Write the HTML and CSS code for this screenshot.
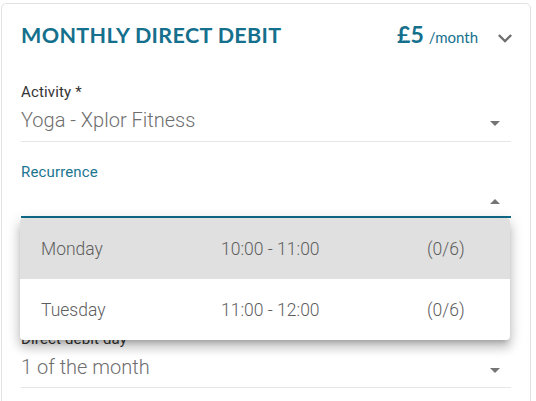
FILE: index.html
```html
<!DOCTYPE html>
<html lang="en">
<head>
<meta charset="utf-8">
<title>Monthly Direct Debit</title>
<link rel="stylesheet" href="styles.css">
</head>
<body>
<div class="card">
  <div class="header">
    <h2 class="title">MONTHLY DIRECT DEBIT</h2>
    <div class="price"><span class="amount">£5</span><span class="per">/month</span></div>
    <svg class="chevron" width="14" height="9" viewBox="6 8.59 12 7.41" aria-hidden="true"><path d="M7.41 8.59L12 13.17 16.59 8.59 18 10l-6 6-6-6z" fill="#6e6e6e"/></svg>
  </div>

  <div class="field">
    <div class="label">Activity *</div>
    <div class="select">
      <span class="value">Yoga - Xplor Fitness</span>
      <svg class="arrow" width="10" height="5" viewBox="0 0 10 5" aria-hidden="true"><path d="M0 0h10L5 5z" fill="#757575"/></svg>
    </div>
  </div>

  <div class="field focused">
    <div class="label">Recurrence</div>
    <div class="select">
      <span class="value"></span>
      <svg class="arrow" width="10" height="5" viewBox="0 0 10 5" aria-hidden="true"><path d="M0 5h10L5 0z" fill="#757575"/></svg>
    </div>
    <div class="menu">
      <div class="option active"><span>Monday</span><span>10:00 - 11:00</span><span>(0/6)</span></div>
      <div class="option"><span>Tuesday</span><span>11:00 - 12:00</span><span>(0/6)</span></div>
    </div>
  </div>

  <div class="field day">
    <div class="label">Direct debit day</div>
    <div class="select">
      <span class="value">1 of the month</span>
      <svg class="arrow" width="10" height="5" viewBox="0 0 10 5" aria-hidden="true"><path d="M0 0h10L5 5z" fill="#757575"/></svg>
    </div>
  </div>
</div>
</body>
</html>
```
FILE: styles.css
```css
* { box-sizing: border-box; }

html, body {
  margin: 0;
  background: #ffffff;
}

body {
  padding: 3px 0 0 1px;
  font-family: Roboto, "Liberation Sans", sans-serif;
  overflow: hidden;
}

.card {
  width: 530px;
  border: 1px solid #e2e2e2;
  border-radius: 5px;
  padding: 0 19px 60px 19px;
  background: #fff;
}

.header {
  display: flex;
  align-items: baseline;
  padding-top: 18px;
  height: 80px;
}

.title {
  margin: 0;
  flex: 1;
  font-family: Lato, "Open Sans", sans-serif;
  font-weight: 700;
  font-size: 21.5px;
  line-height: 24px;
  letter-spacing: 0.35px;
  color: #15708d;
}

.price {
  font-family: Lato, "Open Sans", sans-serif;
  color: #15708d;
  line-height: 24px;
}

.amount {
  font-weight: 700;
  font-size: 23px;
}

.per {
  font-size: 15px;
  margin-left: 5px;
}

.chevron {
  margin-left: 20px;
  margin-right: -1px;
  margin-bottom: 2px;
}

.field {
  position: relative;
}

.field.focused {
  margin-top: 22px;
}

.field.day {
  margin-top: 113px;
}

.label {
  font-size: 15px;
  line-height: 16px;
  letter-spacing: 0.15px;
  color: #333333;
}

.focused .label {
  color: #1b7591;
}

.select {
  display: flex;
  align-items: flex-end;
  padding: 8px 0 9px;
  border-bottom: 1px solid #e6e6e6;
}

.focused .select {
  padding-bottom: 4px;
  border-bottom: 2px solid #0f6b88;
}

.day .select {
  padding-bottom: 8px;
}

.value {
  flex: 1;
  display: block;
  height: 24px;
  font-size: 20px;
  font-weight: 300;
  line-height: 24px;
  color: #6e6e6e;
}

.arrow {
  margin-right: 11px;
  margin-bottom: 6px;
}

.focused .arrow {
  margin-bottom: 8px;
}

.menu {
  position: absolute;
  top: 100%;
  left: -1px;
  width: 490px;
  background: #fff;
  border-radius: 4px;
  overflow: hidden;
  z-index: 2;
  box-shadow: 0 5px 5px -3px rgba(0,0,0,0.2), 0 8px 10px 1px rgba(0,0,0,0.14), 0 3px 14px 2px rgba(0,0,0,0.12);
}

.option {
  display: grid;
  grid-template-columns: 180px 206px auto;
  align-items: center;
  height: 61px;
  padding-left: 21px;
  font-size: 17.5px;
  font-weight: 300;
  line-height: 20px;
  color: #5e5e5e;
}

.option.active {
  background: #e0e0e0;
}
```
